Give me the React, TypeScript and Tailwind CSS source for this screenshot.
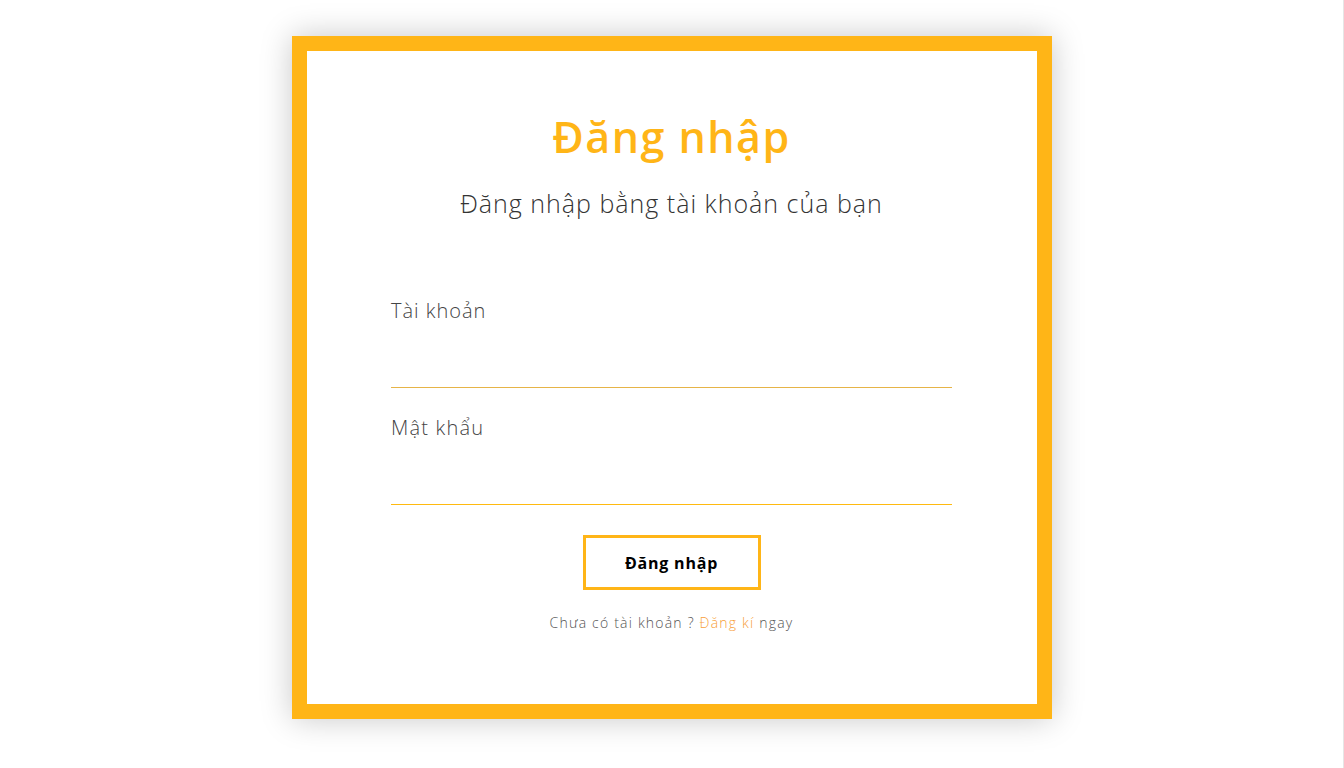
export default function App() {
  return (
    <div
      className="min-h-screen bg-white border-r border-[#e6e6e6] flex justify-center pt-[36px]"
      style={{ fontFamily: '"Open Sans", "DejaVu Sans", sans-serif' }}
    >
      <div className="w-[760px] h-[683px] border-[15px] border-[#ffb517] bg-white shadow-[0_0_30px_rgba(0,0,0,0.22)] flex flex-col items-center pt-[62px]">
        <h1 className="text-[43px] leading-[48px] font-semibold tracking-[1.5px] text-[#ffb517]">Đăng nhập</h1>
        <p className="mt-[26px] text-[25px] leading-[32px] font-light tracking-[1px] text-[#333]">
          Đăng nhập bằng tài khoản của bạn
        </p>

        <form className="w-[561px] mt-[78px] flex flex-col">
          <label className="text-[20px] leading-[28px] font-light tracking-[1px] text-[#444]">Tài khoản</label>
          <input
            type="text"
            className="h-[63px] border-b border-[#e6b448] outline-none text-[18px] text-[#333]"
          />
          <label className="mt-[26px] text-[20px] leading-[28px] font-light tracking-[1.2px] text-[#444]">Mật khẩu</label>
          <input
            type="password"
            className="h-[63px] border-b border-[#ffba10] outline-none text-[18px] text-[#333]"
          />
          <button
            type="button"
            className="self-center mt-[30px] w-[178px] h-[55px] border-[3px] border-[#ffb517] bg-white text-[16px] font-bold tracking-[0.8px] text-black"
          >
            Đăng nhập
          </button>
        </form>

        <p className="mt-[23px] text-[14px] leading-[20px] font-light tracking-[1.2px] text-[#555]">
          Chưa có tài khoản ? <a className="text-[#f7a03a]">Đăng kí</a> ngay
        </p>
      </div>
    </div>
  );
}
